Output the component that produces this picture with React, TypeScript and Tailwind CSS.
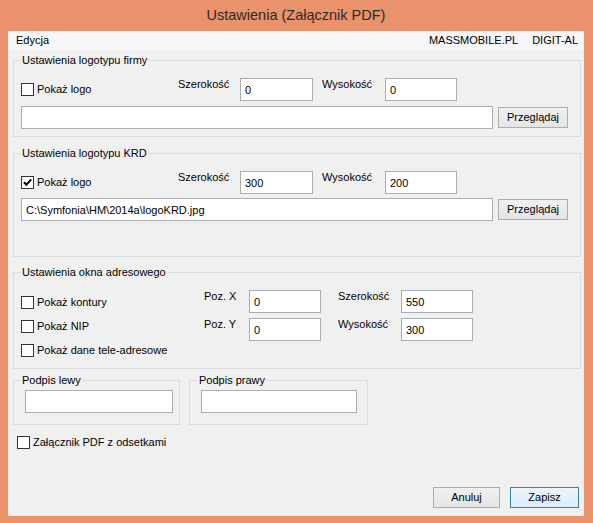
import type { ReactNode } from 'react';

// Windows 8 style settings dialog (Ustawienia – Załącznik PDF)

function Check({ checked }: { checked?: boolean }) {
  return (
    <span className="flex h-[13px] w-[13px] shrink-0 items-center justify-center border border-[#333333] bg-white">
      {checked && (
        <svg viewBox="0 0 11 11" className="h-[11px] w-[11px]">
          <path d="M2 5.2 L4.4 7.8 L9.2 2.4" fill="none" stroke="#000" strokeWidth="2" />
        </svg>
      )}
    </span>
  );
}

function CheckLabel({ checked, children }: { checked?: boolean; children: ReactNode }) {
  return (
    <label className="flex items-center gap-[3px]">
      <Check checked={checked} />
      <span>{children}</span>
    </label>
  );
}

function Field({ value = '', className = '' }: { value?: string; className?: string }) {
  return (
    <input
      readOnly
      value={value}
      className={`h-[23px] shrink-0 border border-[#abadb3] bg-white pl-[4px] outline-none ${className}`}
    />
  );
}

function Button({ children, className = '', primary }: { children: ReactNode; className?: string; primary?: boolean }) {
  return (
    <button
      className={`flex h-[21px] shrink-0 items-center justify-center border bg-gradient-to-b ${
        primary
          ? 'border-[#3c7fb1] from-[#ecf4fc] to-[#dcecfc]'
          : 'border-[#acacac] from-[#f0f0f0] to-[#e5e5e5]'
      } ${className}`}
    >
      {children}
    </button>
  );
}

export default function App() {
  return (
    <div className="flex h-[523px] w-[593px] flex-col bg-[#e9926b] pb-[7px] pl-[8px] pr-[9px] font-['Liberation_Sans',Arial,sans-serif]">
      {/* Title bar */}
      <div className="flex h-[31px] shrink-0 items-center justify-center text-[14.5px] text-[#2b2b2b]">
        Ustawienia (Załącznik PDF)
      </div>

      <div className="flex flex-1 flex-col bg-[#f0f0f0] text-[11px] leading-[13px] text-black">
        {/* Menu */}
        <div className="flex h-[19px] shrink-0 items-center bg-[#f6f6f6] pl-[8px] pr-[6px]">
          <span>Edycja</span>
          <span className="ml-auto">MASSMOBILE.PL</span>
          <span className="ml-[14px]">DIGIT-AL</span>
        </div>

        <div className="flex flex-1 flex-col pl-[5px] pr-[3px]">
          {/* Logo firmy */}
          <fieldset className="mt-[4px] border border-[#dcdcdc] pb-[7px] pl-[7px] pt-[11px]">
            <legend className="px-[1px] leading-[13px]">Ustawienia logotypu firmy</legend>
            <div className="flex h-[23px]">
              <div className="flex w-[157px] items-center">
                <CheckLabel>Pokaż logo</CheckLabel>
              </div>
              <span className="w-[62px]">Szerokość</span>
              <Field value="0" className="w-[73px]" />
              <span className="ml-[9px] w-[63px]">Wysokość</span>
              <Field value="0" className="w-[72px]" />
            </div>
            <div className="mt-[5px] flex">
              <Field className="w-[472px]" />
              <Button className="ml-[5px] mt-[1px] w-[70px]">Przeglądaj</Button>
            </div>
          </fieldset>

          {/* Logo KRD */}
          <fieldset className="mt-[10px] border border-[#dcdcdc] pb-[35px] pl-[7px] pt-[11px]">
            <legend className="px-[1px] leading-[13px]">Ustawienia logotypu KRD</legend>
            <div className="flex h-[23px]">
              <div className="flex w-[157px] items-center">
                <CheckLabel checked>Pokaż logo</CheckLabel>
              </div>
              <span className="w-[62px]">Szerokość</span>
              <Field value="300" className="w-[73px]" />
              <span className="ml-[9px] w-[63px]">Wysokość</span>
              <Field value="200" className="w-[72px]" />
            </div>
            <div className="mt-[4px] flex">
              <Field value="C:\Symfonia\HM\2014a\logoKRD.jpg" className="w-[472px]" />
              <Button className="ml-[5px] mt-[1px] w-[70px]">Przeglądaj</Button>
            </div>
          </fieldset>

          {/* Okno adresowe */}
          <fieldset className="mt-[9px] flex border border-[#dcdcdc] pb-[11px] pl-[7px] pt-[11px]">
            <legend className="px-[1px] leading-[13px]">Ustawienia okna adresowego</legend>
            <div className="flex">
              <div className="flex w-[183px] flex-col gap-[11px] pt-[6px]">
                <CheckLabel>Pokaż kontury</CheckLabel>
                <CheckLabel>Pokaż NIP</CheckLabel>
                <CheckLabel>Pokaż dane tele-adresowe</CheckLabel>
              </div>
              <div className="flex flex-col gap-[5px]">
                <div className="flex">
                  <span className="w-[45px]">Poz. X</span>
                  <Field value="0" className="w-[72px]" />
                </div>
                <div className="flex">
                  <span className="w-[45px]">Poz. Y</span>
                  <Field value="0" className="w-[72px]" />
                </div>
              </div>
              <div className="ml-[17px] flex flex-col gap-[5px]">
                <div className="flex">
                  <span className="w-[63px]">Szerokość</span>
                  <Field value="550" className="w-[72px]" />
                </div>
                <div className="flex">
                  <span className="w-[63px]">Wysokość</span>
                  <Field value="300" className="w-[72px]" />
                </div>
              </div>
            </div>
          </fieldset>

          {/* Podpisy */}
          <div className="mt-[5px] flex gap-[9px]">
            <fieldset className="w-[167px] border border-[#dcdcdc] pb-[11px] pl-[11px] pt-[3px]">
              <legend className="-ml-[4px] px-[1px] leading-[13px]">Podpis lewy</legend>
              <Field className="w-[148px]" />
            </fieldset>
            <fieldset className="w-[179px] border border-[#dcdcdc] pb-[11px] pl-[11px] pt-[3px]">
              <legend className="-ml-[3px] px-[1px] leading-[13px]">Podpis prawy</legend>
              <Field className="w-[156px]" />
            </fieldset>
          </div>

          <div className="ml-[4px] mt-[11px]">
            <CheckLabel>Załącznik PDF z odsetkami</CheckLabel>
          </div>

          <div className="flex-1" />

          <div className="mr-[2px] flex justify-end gap-[10px] pb-[8px]">
            <Button className="w-[67px]">Anuluj</Button>
            <Button primary className="w-[69px]">Zapisz</Button>
          </div>
        </div>
      </div>
    </div>
  );
}
